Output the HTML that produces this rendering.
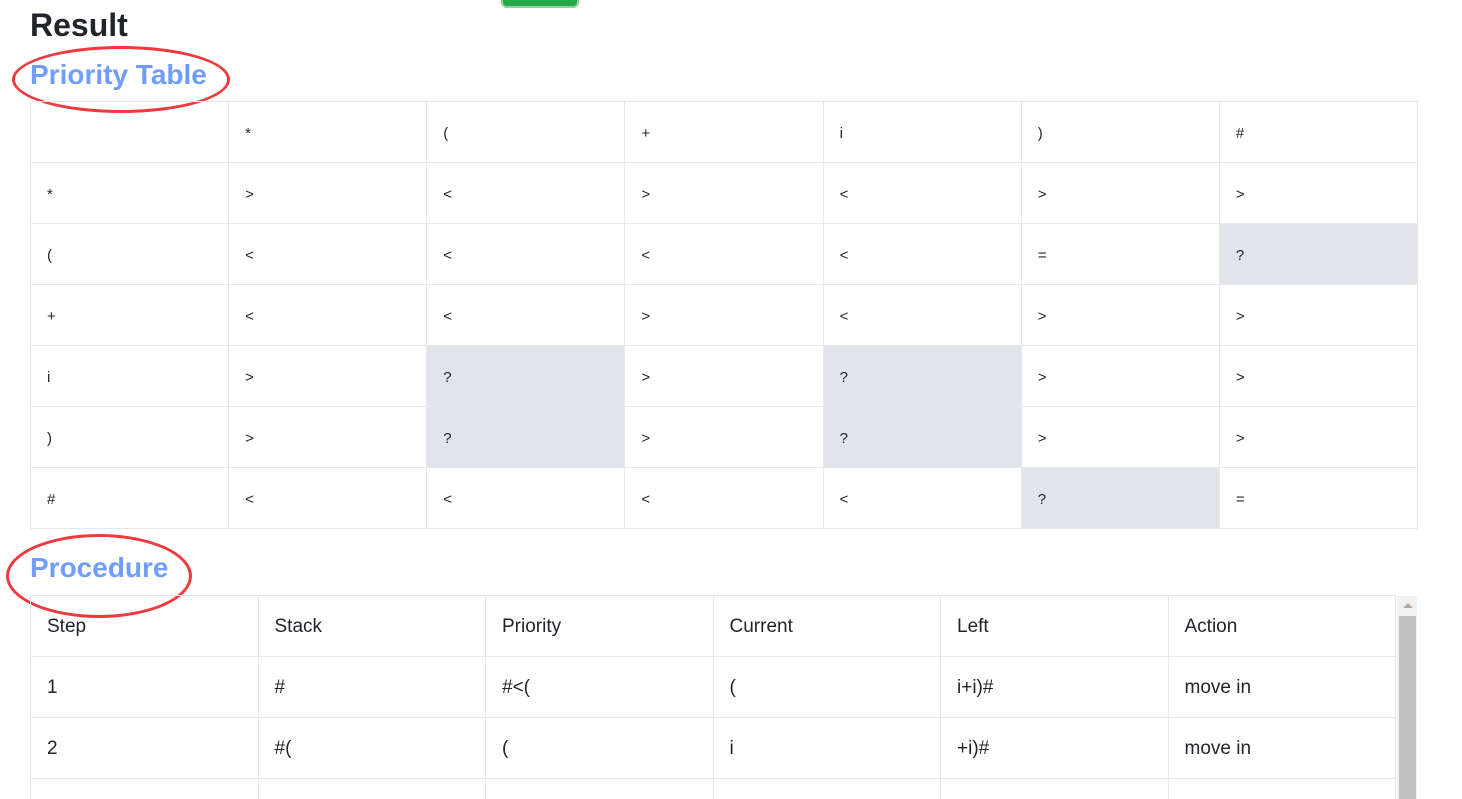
<!DOCTYPE html>
<html><head><style>
html,body{margin:0;width:1462px;height:799px;overflow:hidden}
body{background:#fff;font-family:"Liberation Sans",sans-serif;color:#212529;position:relative}
.a{position:absolute}
table{border-collapse:collapse;table-layout:fixed;position:absolute}
td{border:1px solid #e5e7eb;padding:2px 0 0 16px;box-sizing:border-box}
#t1{left:30px;top:101px;width:1388px;font-size:15px}
#t1 td{height:61px;width:198px}
#wrap{position:absolute;left:30px;top:595px;width:1366px;height:204px;overflow:hidden}
#t2{left:0;top:0;width:1366px;font-size:19px}
#t2 td{height:61px}
.g{background:#e1e5eb}
</style></head><body>
<div class="a" style="left:501px;top:-6px;width:74px;height:10px;background:#28a745;border:2px solid #8fd19e;border-radius:6px"></div>
<div class="a" style="left:30px;top:5px;font-size:32px;font-weight:bold;line-height:40px">Result</div>
<div class="a" style="left:30px;top:57px;font-size:28px;font-weight:bold;color:#6f9eff;line-height:36px">Priority Table</div>
<div class="a" style="left:12px;top:46px;width:212px;height:61px;border:3px solid #f0393c;border-radius:50%"></div>
<table id="t1">
<tr><td></td><td>*</td><td>(</td><td>+</td><td>i</td><td>)</td><td>#</td></tr>
<tr><td>*</td><td>&gt;</td><td>&lt;</td><td>&gt;</td><td>&lt;</td><td>&gt;</td><td>&gt;</td></tr>
<tr><td>(</td><td>&lt;</td><td>&lt;</td><td>&lt;</td><td>&lt;</td><td>=</td><td class="g">?</td></tr>
<tr><td>+</td><td>&lt;</td><td>&lt;</td><td>&gt;</td><td>&lt;</td><td>&gt;</td><td>&gt;</td></tr>
<tr><td>i</td><td>&gt;</td><td class="g">?</td><td>&gt;</td><td class="g">?</td><td>&gt;</td><td>&gt;</td></tr>
<tr><td>)</td><td>&gt;</td><td class="g">?</td><td>&gt;</td><td class="g">?</td><td>&gt;</td><td>&gt;</td></tr>
<tr><td>#</td><td>&lt;</td><td>&lt;</td><td>&lt;</td><td>&lt;</td><td class="g">?</td><td>=</td></tr>
</table>
<div class="a" style="left:30px;top:550px;font-size:28px;font-weight:bold;color:#6f9eff;line-height:36px">Procedure</div>
<div class="a" style="left:6px;top:534px;width:180px;height:78px;border:3px solid #f0393c;border-radius:50%"></div>
<div id="wrap">
<table id="t2">
<tr><td>Step</td><td>Stack</td><td>Priority</td><td>Current</td><td>Left</td><td>Action</td></tr>
<tr><td>1</td><td>#</td><td>#&lt;(</td><td>(</td><td>i+i)#</td><td>move in</td></tr>
<tr><td>2</td><td>#(</td><td>(</td><td>i</td><td>+i)#</td><td>move in</td></tr>
<tr><td></td><td></td><td></td><td></td><td></td><td></td></tr>
</table>
</div>
<div class="a" style="left:1397px;top:596px;width:20px;height:203px;background:#f1f1f1"></div>
<div class="a" style="left:1399px;top:616px;width:17px;height:183px;background:#c1c1c1"></div>
<div class="a" style="left:1403px;top:603px;width:0;height:0;border-left:5px solid transparent;border-right:5px solid transparent;border-bottom:5px solid #b8ab9c"></div>
</body></html>
